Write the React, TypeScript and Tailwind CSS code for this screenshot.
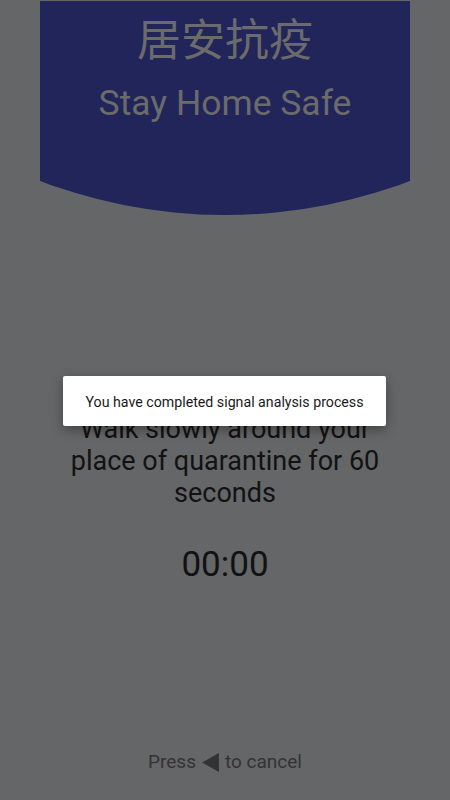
import React from "react";

export default function App() {
  return (
    <div
      className="relative h-[800px] w-[450px] overflow-hidden bg-[#656667]"
      style={{ fontFamily: 'Roboto, "Noto Sans CJK SC", sans-serif' }}
    >
      <div className="flex h-full flex-col items-center">
        <div className="mt-px flex h-[214px] w-[370px] flex-col items-center bg-[#212559] [clip-path:circle(520px_at_50%_-306px)]">
          <div className="mt-[10px] text-[44px] leading-[52px] text-[#6b6b6b]" style={{ fontFamily: '"Noto Sans CJK SC", sans-serif' }}>
            居安抗疫
          </div>
          <div className="mt-[19px] text-[35.5px] leading-[42px] text-[#6b6b6b]">Stay Home Safe</div>
        </div>
        <div className="mt-[198px] w-[330px] text-center text-[27px] leading-[32px] text-[#121212]">
          Walk slowly around your place of quarantine for 60 seconds
        </div>
        <div className="mt-[35px] text-[35px] leading-[42px] text-[#121212]">00:00</div>
        <div className="mt-auto mb-[27px] flex items-center gap-[6px] text-[19px] leading-[22px] text-[#333333]">
          <span>Press</span>
          <svg width="17" height="19" viewBox="0 0 16 18" className="mt-px">
            <path d="M16 0 L16 18 L0 9 Z" fill="#333333" />
          </svg>
          <span>to cancel</span>
        </div>
      </div>
      <div className="absolute left-[63px] top-[376px] flex h-[50px] w-[323px] items-center justify-center rounded-[2px] bg-white pt-[3px] shadow-[0_4px_12px_rgba(0,0,0,0.35)]">
        <span className="text-[14.2px] text-[#1a1a1a]">You have completed signal analysis process</span>
      </div>
    </div>
  );
}
